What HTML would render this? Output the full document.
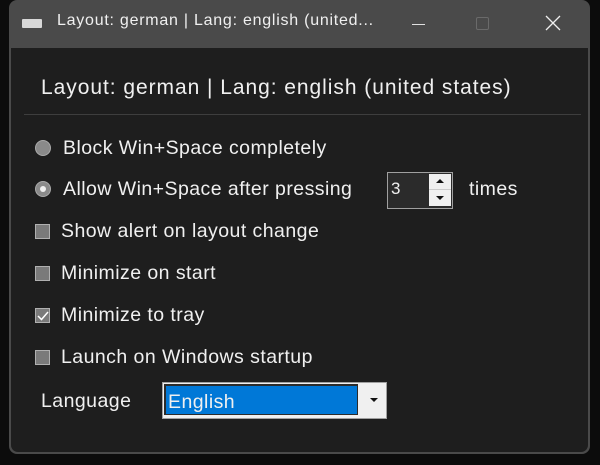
<!DOCTYPE html>
<html><head><meta charset="utf-8"><style>
html,body{margin:0;padding:0;width:600px;height:465px;background:#0c0c0c;overflow:hidden;font-family:"Liberation Sans",sans-serif;}
.win{position:absolute;left:9px;top:0;width:581px;height:454px;background:#4a4a4a;border-radius:8px;}
.content{position:absolute;left:11px;top:48px;width:577px;height:404px;background:#1e1e1e;border-bottom-left-radius:7px;border-bottom-right-radius:7px;}
.t{position:absolute;color:#fff;white-space:nowrap;}
.title{font-size:16px;letter-spacing:0.75px;left:57px;top:12px;color:#f0f0f0;}
.lbl{font-size:19.5px;letter-spacing:0.45px;color:#f0f0f0;}
.rad{position:absolute;width:14px;height:14px;border-radius:50%;background:#8a8a8a;border:1px solid #aaa;}
.chk{position:absolute;width:13px;height:13px;background:#7a7a7a;border:1px solid #b0b0b0;}
</style></head><body>
<div class="win"></div>
<div style="position:absolute;left:22px;top:19px;width:20px;height:9px;background:#d8d8d8;border-radius:1px"></div>
<div class="t title">Layout: german | Lang: english (united...</div>
<div style="position:absolute;left:412px;top:24px;width:13px;height:1px;background:#e0e0e0"></div>
<div style="position:absolute;left:476px;top:17px;width:11px;height:11px;border:1px solid #6a6a6a;border-radius:2px"></div>
<svg style="position:absolute;left:545px;top:15px" width="16" height="16"><path d="M1 1L15 15M15 1L1 15" stroke="#eee" stroke-width="1.3"/></svg>
<div class="content"></div>
<div class="t lbl" style="left:41px;top:76px;font-size:21px;letter-spacing:0.95px">Layout: german | Lang: english (united states)</div>
<div style="position:absolute;left:24px;top:114px;width:557px;height:1px;background:#3e3e3e"></div>

<div class="rad" style="left:35px;top:140px"></div>
<div class="t lbl" style="left:63px;top:137px">Block Win+Space completely</div>

<div class="rad" style="left:35px;top:181px"></div>
<div style="position:absolute;left:40px;top:186px;width:6px;height:6px;border-radius:50%;background:#eee"></div>
<div class="t lbl" style="left:63px;top:178px">Allow Win+Space after pressing</div>

<div style="position:absolute;left:387px;top:172px;width:64px;height:35px;border:1px solid #a0a0a0;background:#2b2b2b"></div>
<div class="t lbl" style="left:391px;top:179px;font-size:17px">3</div>
<div style="position:absolute;left:429px;top:174px;width:22px;height:15px;background:#f0f0f0;border-bottom:1px solid #ccc"></div>
<div style="position:absolute;left:429px;top:190px;width:22px;height:16px;background:#f0f0f0"></div>
<svg style="position:absolute;left:435px;top:178px" width="10" height="26"><path d="M1 5L5 1L9 5Z M1 18L9 18L5 22Z" fill="#111"/></svg>
<div class="t lbl" style="left:469px;top:178px">times</div>

<div class="chk" style="left:35px;top:224px"></div>
<div class="t lbl" style="left:61px;top:220px">Show alert on layout change</div>

<div class="chk" style="left:35px;top:266px"></div>
<div class="t lbl" style="left:61px;top:262px">Minimize on start</div>

<div class="chk" style="left:35px;top:308px"></div>
<svg style="position:absolute;left:37px;top:310px" width="12" height="12"><path d="M1 6L4.5 9.5L11 2" stroke="#fff" stroke-width="1.5" fill="none"/></svg>
<div class="t lbl" style="left:61px;top:304px">Minimize to tray</div>

<div class="chk" style="left:35px;top:350px"></div>
<div class="t lbl" style="left:61px;top:346px">Launch on Windows startup</div>

<div class="t lbl" style="left:41px;top:390px">Language</div>
<div style="position:absolute;left:162px;top:382px;width:223px;height:35px;border:1px solid #a0a0a0;background:#f0f0f0"></div>
<div style="position:absolute;left:164px;top:384px;width:194px;height:31px;background:#2b2b2b"></div>
<div style="position:absolute;left:166px;top:386px;width:191px;height:28px;background:#0078d7"></div>
<div class="t lbl" style="left:168px;top:391px">English</div>
<svg style="position:absolute;left:369px;top:397px" width="10" height="6"><path d="M1 1L9 1L5 5Z" fill="#111"/></svg>
</body></html>
